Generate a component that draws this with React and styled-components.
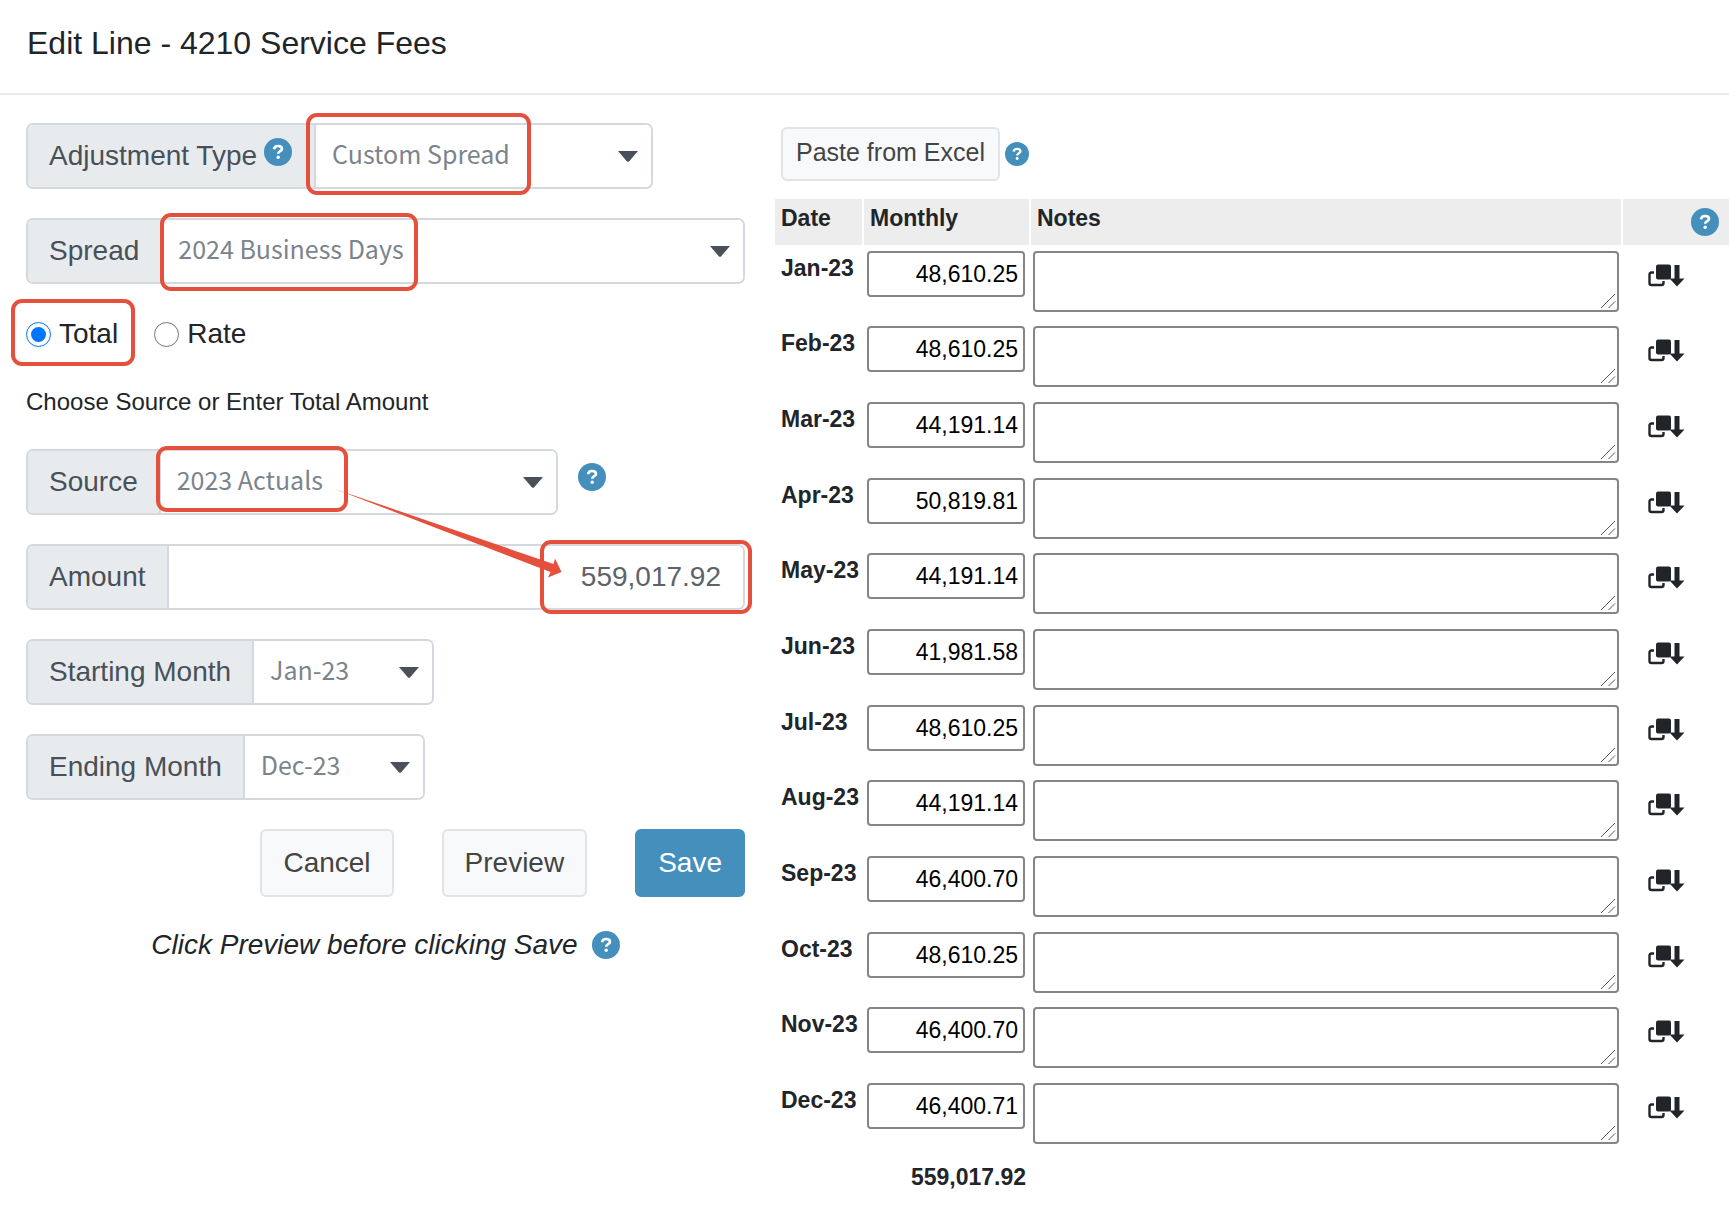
import React, { useState } from 'react'
import styled, { createGlobalStyle, css } from 'styled-components'

const spreads = [
  { month: 'Jan-23', amount: '48,610.25' },
  { month: 'Feb-23', amount: '48,610.25' },
  { month: 'Mar-23', amount: '44,191.14' },
  { month: 'Apr-23', amount: '50,819.81' },
  { month: 'May-23', amount: '44,191.14' },
  { month: 'Jun-23', amount: '41,981.58' },
  { month: 'Jul-23', amount: '48,610.25' },
  { month: 'Aug-23', amount: '44,191.14' },
  { month: 'Sep-23', amount: '46,400.70' },
  { month: 'Oct-23', amount: '48,610.25' },
  { month: 'Nov-23', amount: '46,400.70' },
  { month: 'Dec-23', amount: '46,400.71' },
]

const months = spreads.map((s) => s.month)

function Help({ label, small }) {
  const size = small ? 24 : 28
  return (
    <HelpButton type="button" aria-label={label}>
      <svg width={size} height={size} viewBox="0 0 28 28">
        <circle cx="14" cy="14" r="14" fill="#458fbd" />
        <path d="M10 11.200q.5-3.200 4-3.200 4 0 4 2.900c0 2.300-3.800 2.300-3.800 4.900" fill="none" stroke="#fff" strokeWidth="2.600" />
        <circle cx="14.200" cy="19.300" r="1.700" fill="#fff" />
      </svg>
    </HelpButton>
  )
}

function SelectField({ id, label, help, width, options, value, children }) {
  return (
    <Field $width={width}>
      <FieldLabel htmlFor={id}>{label}</FieldLabel>
      {help && <LabelHelp><Help label={help} /></LabelHelp>}
      <SelectBox>
        <Select id={id} defaultValue={value}>
          {options.map((o) => <option key={o}>{o}</option>)}
        </Select>
        <Caret viewBox="0 0 20 11"><path d="M0 0h20L11 10.400q-1 .8-2 0z" /></Caret>
      </SelectBox>
      {children}
    </Field>
  )
}

function CopyDownIcon() {
  return (
    <svg width="37" height="23" viewBox="0 0 37 23" aria-hidden="true">
      <path d="M6 8.500H3.500q-2 0-2 2v8.500q0 2 2 2h10q2 0 2-2v-2" fill="none" stroke="#212529" strokeWidth="2.400" />
      <rect x="8" y="0.500" width="15" height="15" rx="2" fill="#212529" />
      <path d="M26.500 1h5v13.500h5L29 22.500 21.500 14.500h5z" fill="#212529" />
    </svg>
  )
}

function MonthRow({ month, amount }) {
  return (
    <tr>
      <DateCell scope="row">{month}</DateCell>
      <Cell $pad="6px 4px 0 5px">
        <MonthInput defaultValue={amount} aria-label={month + ' monthly amount'} />
      </Cell>
      <Cell $pad="6px 2px 0 4px">
        <NoteBox>
          <Note aria-label={month + ' notes'} />
          <Grip viewBox="0 0 16 16"><path d="M1 15L15 1M8.500 15L15 8.500" /></Grip>
        </NoteBox>
      </Cell>
      <Cell $pad="19px 0 0 27px">
        <CopyButton type="button" aria-label={'Copy ' + month + ' down'}><CopyDownIcon /></CopyButton>
      </Cell>
    </tr>
  )
}

function App() {
  const [mode, setMode] = useState('total')

  return (
    <>
      <GlobalStyle />
      <Header>
        <Title>Edit Line - 4210 Service Fees</Title>
      </Header>
      <Body>
        <Form onSubmit={(e) => e.preventDefault()}>
          <SelectField id="type" label="Adjustment Type" help="About adjustment types"
            width={627} options={['Custom Spread']} value="Custom Spread">
            <Mark $left={278} $top={-12} $width={225} $height={82} />
          </SelectField>
          <SelectField id="spread" label="Spread" width={719}
            options={['2024 Business Days']} value="2024 Business Days">
            <Mark $left={132} $top={-7} $width={258} $height={78} />
          </SelectField>

          <Radios>
            <RadioLabel>
              <Radio name="mode" checked={mode === 'total'} onChange={() => setMode('total')} />
              Total
            </RadioLabel>
            <RadioLabel>
              <Radio name="mode" checked={mode === 'rate'} onChange={() => setMode('rate')} />
              Rate
            </RadioLabel>
            <Mark $left={-15} $top={-14} $width={124} $height={67} />
          </Radios>

          <Hint>Choose Source or Enter Total Amount</Hint>

          <FieldRow>
            <SelectField id="source" label="Source" width={532}
              options={['2023 Actuals']} value="2023 Actuals">
              <Mark $left={128} $top={-5} $width={192} $height={66} />
            </SelectField>
            <Help label="About sources" />
            {/* arrow from the source to the amount it fills in */}
            <Arrow viewBox="0 0 240 96">
              <path d="M5 4L223.500 79 225 73.500 231.500 87 218 92.500 220.500 87z" />
            </Arrow>
          </FieldRow>

          <Field $width={719}>
            <FieldLabel htmlFor="amount">Amount</FieldLabel>
            <AmountInput id="amount" defaultValue="559,017.92" />
            <Mark $left={512} $top={-6} $width={212} $height={74} />
          </Field>
          <SelectField id="start" label="Starting Month" width={408} options={months} value="Jan-23" />
          <SelectField id="end" label="Ending Month" width={399} options={months} value="Dec-23" />

          <Actions>
            <Button type="button">Cancel</Button>
            <Button type="button">Preview</Button>
            <Button type="submit" $primary>Save</Button>
          </Actions>
          <Reminder>
            <em>Click Preview before clicking Save</em>
            <Help label="About previewing" />
          </Reminder>
        </Form>

        <Monthly>
          <PasteBar>
            <PasteButton type="button">Paste from Excel</PasteButton>
            <Help small label="About pasting" />
          </PasteBar>
          <Table>
            <colgroup>
              <Col $width={87} />
              <Col $width={167} />
              <col />
              <Col $width={108} />
            </colgroup>
            <thead>
              <tr>
                <HeadCell>Date</HeadCell>
                <HeadCell>Monthly</HeadCell>
                <HeadCell>Notes</HeadCell>
                <HeadCell $right><Help label="About copying down" /></HeadCell>
              </tr>
            </thead>
            <tbody>
              {spreads.map((s) => <MonthRow key={s.month} {...s} />)}
            </tbody>
            <tfoot>
              <tr>
                <td />
                <TotalCell>559,017.92</TotalCell>
                <td />
                <td />
              </tr>
            </tfoot>
          </Table>
        </Monthly>
      </Body>
    </>
  )
}

export default App

const GlobalStyle = createGlobalStyle`
  * {
    box-sizing: border-box;
  }
  body {
    margin: 0;
    background: #fff;
    color: #212529;
    font-family: "Liberation Sans", Arial, sans-serif;
    font-size: 28px;
  }
  button, input, select, textarea {
    margin: 0;
    font-family: inherit;
  }
`

const Header = styled.header`
  padding: 24px 27px 31px;
  border-bottom: 2px solid #e9ecef;
`

const Title = styled.h1`
  margin: 0;
  font-size: 32px;
  line-height: 38px;
  font-weight: 400;
`

const Body = styled.main`
  display: grid;
  grid-template-columns: 775px minmax(0, 1fr);
  padding-top: 28px;
`

const Form = styled.form`
  display: flex;
  flex-direction: column;
  align-items: flex-start;
  gap: 29px;
  padding: 0 30px 0 26px;
`

const Field = styled.div`
  position: relative;
  display: flex;
  width: ${(p) => p.$width}px;
  height: 66px;
  border: 2px solid #d3d9de;
  border-radius: 7px;
`

const FieldLabel = styled.label`
  display: flex;
  align-items: center;
  padding: 0 21px;
  border-radius: 5px 0 0 5px;
  background: #e7ebee;
  color: #495057;
  white-space: nowrap;
`

const LabelHelp = styled.span`
  display: flex;
  align-items: center;
  margin-left: -14px;
  padding: 0 22px 8px 0;
  background: #e7ebee;
`

const SelectBox = styled.div`
  position: relative;
  flex: 1;
  border-left: 2px solid #d3d9de;
`

const Select = styled.select`
  appearance: none;
  width: 100%;
  height: 100%;
  padding: 0 40px 6px 16px;
  border: 0;
  border-radius: 5px;
  background: #fff;
  color: #7b848c;
  font-family: "Noto Sans CJK SC", "Open Sans", sans-serif;
  font-size: 25px;
`

const Caret = styled.svg`
  position: absolute;
  top: 26px;
  right: 13px;
  width: 20px;
  height: 11px;
  fill: #495057;
  pointer-events: none;
`

const AmountInput = styled.input`
  flex: 1;
  min-width: 0;
  padding: 0 22px;
  border: 0;
  border-left: 2px solid #d3d9de;
  border-radius: 0 5px 5px 0;
  background: #fff;
  color: #5c636a;
  font-size: 28px;
  text-align: right;
`

const HelpButton = styled.button`
  display: inline-flex;
  padding: 0;
  border: 0;
  background: none;
`

const FieldRow = styled.div`
  position: relative;
  display: flex;
  align-items: center;
  gap: 20px;
  > ${HelpButton} {
    padding-bottom: 10px;
  }
`

/* red outline around the values to look at */
const Mark = styled.span`
  position: absolute;
  z-index: 1;
  left: ${(p) => p.$left}px;
  top: ${(p) => p.$top}px;
  width: ${(p) => p.$width}px;
  height: ${(p) => p.$height}px;
  border: 4px solid #e5503c;
  border-radius: 11px;
  pointer-events: none;
`

const Arrow = styled.svg`
  position: absolute;
  z-index: 2;
  left: 304px;
  top: 36px;
  width: 240px;
  height: 96px;
  fill: #e5503c;
  pointer-events: none;
`

const Radios = styled.div`
  position: relative;
  display: flex;
  align-items: center;
  gap: 36px;
  height: 42px;
`

const RadioLabel = styled.label`
  display: flex;
  align-items: center;
  gap: 8px;
`

const Radio = styled.input.attrs({ type: 'radio' })`
  width: 25px;
  height: 25px;
`

const Hint = styled.p`
  margin: 0;
  font-size: 24px;
  line-height: 36px;
`

const Actions = styled.div`
  display: flex;
  justify-content: flex-end;
  gap: 48px;
  width: 100%;
`

const Button = styled.button`
  height: 68px;
  padding: 0 21px;
  border: 2px solid #e2e3e5;
  border-radius: 6px;
  background: #f8f9fb;
  color: #444;
  font-size: 28px;
  ${(p) => p.$primary && css`
    border-color: #458fbd;
    background: #458fbd;
    color: #fff;
  `}
`

const Reminder = styled.div`
  display: flex;
  align-items: center;
  justify-content: center;
  gap: 14px;
  width: 100%;
  line-height: 38px;
`

const Monthly = styled.section`
  padding-top: 4px;
`

const PasteBar = styled.div`
  display: flex;
  align-items: center;
  gap: 5px;
  padding: 0 6px 18px;
`

const PasteButton = styled(Button)`
  height: 54px;
  padding: 0 13px 4px;
  font-size: 25px;
`

const Table = styled.table`
  width: 100%;
  table-layout: fixed;
  border-spacing: 0;
  font-size: 23px;
  line-height: 30px;
`

const Col = styled.col`
  width: ${(p) => p.$width}px;
`

const HeadCell = styled.th`
  height: 46px;
  padding: ${(p) => (p.$right ? '9px 10px 0' : '4px 6px 0')};
  background: #ededed;
  line-height: ${(p) => (p.$right ? '0' : '30px')};
  text-align: ${(p) => (p.$right ? 'right' : 'left')};
  vertical-align: top;
  & + & {
    border-left: 2px solid #fff;
  }
`

const DateCell = styled.th`
  padding: 8px 0 0 6px;
  text-align: left;
  vertical-align: top;
  white-space: nowrap;
`

const Cell = styled.td`
  height: 76px;
  padding: ${(p) => p.$pad};
  vertical-align: top;
  tr:nth-child(3n + 1) > & {
    height: 75px;
  }
`

const MonthInput = styled.input`
  display: block;
  width: 100%;
  height: 46px;
  padding: 0 5px;
  border: 2px solid #858585;
  border-radius: 4px;
  font-size: 23px;
  text-align: right;
`

const NoteBox = styled.div`
  position: relative;
`

const Note = styled.textarea`
  display: block;
  width: 100%;
  height: 61px;
  padding: 4px;
  border: 2px solid #858585;
  border-radius: 4px;
  font-size: 23px;
  resize: none;
`

const Grip = styled.svg`
  position: absolute;
  right: 3px;
  bottom: 3px;
  width: 16px;
  height: 16px;
  fill: none;
  stroke: #555;
  pointer-events: none;
`

const CopyButton = styled.button`
  display: flex;
  padding: 0;
  border: 0;
  background: none;
`

const TotalCell = styled.td`
  padding: 9px 3px 0 0;
  font-weight: 700;
  text-align: right;
`
